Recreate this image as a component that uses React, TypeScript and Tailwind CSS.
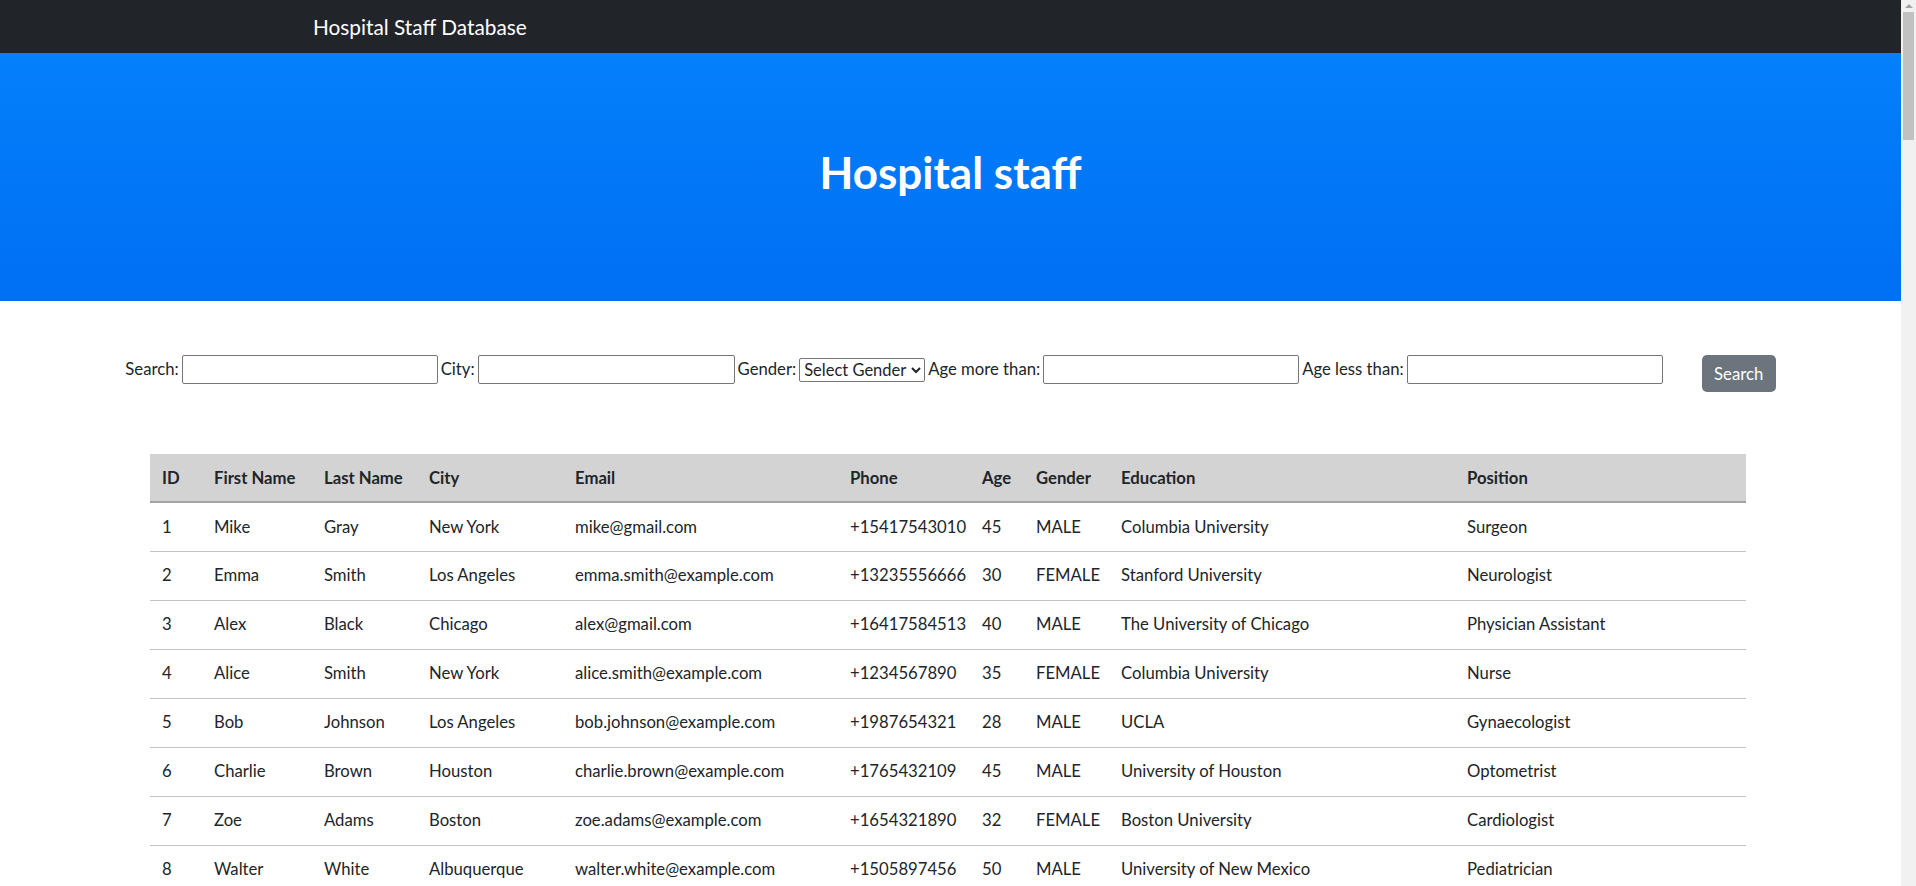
import { useState } from "react";

type Staff = {
  id: number;
  firstName: string;
  lastName: string;
  city: string;
  email: string;
  phone: string;
  age: number;
  gender: string;
  education: string;
  position: string;
};

const staff: Staff[] = [
  { id: 1, firstName: "Mike", lastName: "Gray", city: "New York", email: "mike@gmail.com", phone: "+15417543010", age: 45, gender: "MALE", education: "Columbia University", position: "Surgeon" },
  { id: 2, firstName: "Emma", lastName: "Smith", city: "Los Angeles", email: "emma.smith@example.com", phone: "+13235556666", age: 30, gender: "FEMALE", education: "Stanford University", position: "Neurologist" },
  { id: 3, firstName: "Alex", lastName: "Black", city: "Chicago", email: "alex@gmail.com", phone: "+16417584513", age: 40, gender: "MALE", education: "The University of Chicago", position: "Physician Assistant" },
  { id: 4, firstName: "Alice", lastName: "Smith", city: "New York", email: "alice.smith@example.com", phone: "+1234567890", age: 35, gender: "FEMALE", education: "Columbia University", position: "Nurse" },
  { id: 5, firstName: "Bob", lastName: "Johnson", city: "Los Angeles", email: "bob.johnson@example.com", phone: "+1987654321", age: 28, gender: "MALE", education: "UCLA", position: "Gynaecologist" },
  { id: 6, firstName: "Charlie", lastName: "Brown", city: "Houston", email: "charlie.brown@example.com", phone: "+1765432109", age: 45, gender: "MALE", education: "University of Houston", position: "Optometrist" },
  { id: 7, firstName: "Zoe", lastName: "Adams", city: "Boston", email: "zoe.adams@example.com", phone: "+1654321890", age: 32, gender: "FEMALE", education: "Boston University", position: "Cardiologist" },
  { id: 8, firstName: "Walter", lastName: "White", city: "Albuquerque", email: "walter.white@example.com", phone: "+1505897456", age: 50, gender: "MALE", education: "University of New Mexico", position: "Pediatrician" },
];

const headers = ["ID", "First Name", "Last Name", "City", "Email", "Phone", "Age", "Gender", "Education", "Position"];
const colWidths = ["w-[52px]", "w-[110px]", "w-[105px]", "w-[146px]", "w-[275px]", "w-[132px]", "w-[54px]", "w-[85px]", "w-[346px]", "w-[291px]"];

export default function App() {
  const [search, setSearch] = useState("");
  const [city, setCity] = useState("");
  const [gender, setGender] = useState("");
  const [ageMin, setAgeMin] = useState("");
  const [ageMax, setAgeMax] = useState("");

  return (
    <div className="flex items-start bg-white text-[#212529] font-['Lato','Noto_Sans',sans-serif]">
      <main className="flex-1 min-w-0">
        <nav className="h-[53px] bg-[#212529] flex items-center pl-[313px]">
          <span className="text-white text-[20.8px]">Hospital Staff Database</span>
        </nav>

        <header className="h-[248px] bg-gradient-to-b from-[#0580fb] to-[#006ff4] flex items-center justify-center">
          <h1 className="text-white text-[44px] font-bold pb-[10px]">Hospital staff</h1>
        </header>

        <div className="mt-[54px] flex items-start justify-center text-[16.7px]">
          <div className="flex items-center h-[29px]">
            <label>Search:</label>
            <input value={search} onChange={(e) => setSearch(e.target.value)} className="ml-[3px] mr-[3px] w-[256px] h-[29px] border border-[#767676] rounded-[2px]" />
            <label>City:</label>
            <input value={city} onChange={(e) => setCity(e.target.value)} className="ml-[3px] mr-[3px] w-[257px] h-[29px] border border-[#767676] rounded-[2px]" />
            <label>Gender:</label>
            <select value={gender} onChange={(e) => setGender(e.target.value)} className="ml-[3px] mr-[3px] w-[126px] h-[24px] border border-[#767676] rounded-[2px] text-[16.5px] leading-none pl-0">
              <option value="">Select Gender</option>
              <option value="MALE">MALE</option>
              <option value="FEMALE">FEMALE</option>
            </select>
            <label>Age more than:</label>
            <input value={ageMin} onChange={(e) => setAgeMin(e.target.value)} className="ml-[3px] mr-[3px] w-[256px] h-[29px] border border-[#767676] rounded-[2px]" />
            <label>Age less than:</label>
            <input value={ageMax} onChange={(e) => setAgeMax(e.target.value)} className="ml-[3px] w-[256px] h-[29px] border border-[#767676] rounded-[2px]" />
          </div>
          <button className="ml-[39px] h-[37px] w-[74px] bg-[#6c757d] text-white rounded-[5px] text-[16.7px] pt-[2px]">Search</button>
        </div>

        <table className="mt-[62px] ml-[150px] w-[1596px] table-fixed border-collapse text-[16.7px] text-left">
          <colgroup>
            {colWidths.map((w, i) => (
              <col key={i} className={w} />
            ))}
          </colgroup>
          <thead>
            <tr className="bg-[#d3d3d3] h-[48px] border-b-2 border-[#a4a4a4]">
              {headers.map((h) => (
                <th key={h} className="pl-[12px] pt-[3px] font-bold">{h}</th>
              ))}
            </tr>
          </thead>
          <tbody>
            {staff.map((s) => (
              <tr key={s.id} className="h-[49px] border-b border-[#c4c4c4]">
                <td className="pl-[12px] pt-[1px]">{s.id}</td>
                <td className="pl-[12px] pt-[1px]">{s.firstName}</td>
                <td className="pl-[12px] pt-[1px]">{s.lastName}</td>
                <td className="pl-[12px] pt-[1px]">{s.city}</td>
                <td className="pl-[12px] pt-[1px]">{s.email}</td>
                <td className="pl-[12px] pt-[1px]">{s.phone}</td>
                <td className="pl-[12px] pt-[1px]">{s.age}</td>
                <td className="pl-[12px] pt-[1px]">{s.gender}</td>
                <td className="pl-[12px] pt-[1px]">{s.education}</td>
                <td className="pl-[12px] pt-[1px]">{s.position}</td>
              </tr>
            ))}
          </tbody>
        </table>
      </main>

      {/* page scrollbar */}
      <aside className="sticky top-0 w-[15px] h-screen bg-[#f1f1f1] flex flex-col items-center">
        <div className="mt-[4px] w-0 h-0 border-l-[4px] border-r-[4px] border-b-[4px] border-l-transparent border-r-transparent border-b-[#a3a3a3]" />
        <div className="mt-[4px] w-[11px] h-[128px] bg-[#c1c1c1]" />
      </aside>
    </div>
  );
}
